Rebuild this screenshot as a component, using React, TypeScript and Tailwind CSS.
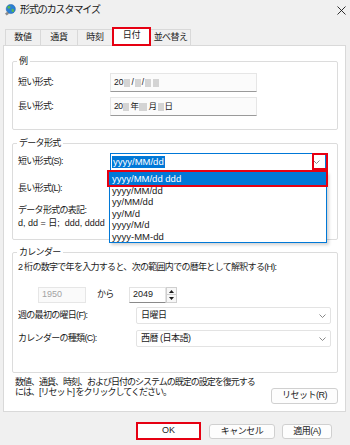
import React from "react";

const FONT = "font-['Liberation_Sans','Noto_Sans_CJK_JP',sans-serif]";

function Chevron() {
  return (
    <svg width="7" height="4" viewBox="0 0 7 4">
      <polyline points="0.5,0.5 3.5,3.5 6.5,0.5" fill="none" stroke="#7a7a7a" strokeWidth="0.9" />
    </svg>
  );
}

function Globe() {
  return (
    <svg width="12" height="12" viewBox="0 0 12 12">
      <circle cx="6.8" cy="5" r="4.6" fill="#2a7fd4" />
      <path d="M4.2 2 C5.6 1.4 7 2.6 6.4 3.8 C5.8 5 4.2 5 3.6 4 C3.2 3.2 3.4 2.4 4.2 2 Z" fill="#59b84f" />
      <path d="M7.6 5 C9 4.4 10.6 5.6 9.8 7.4 C9 8.6 7.8 8.2 7.6 7 Z" fill="#59b84f" />
      <circle cx="6.8" cy="5" r="4.6" fill="none" stroke="#1d5fa8" strokeWidth="0.5" />
      <path d="M1 9.5 L3.6 7.6 L5 9.8 L2.6 11.4 Z" fill="#8c8c8c" />
    </svg>
  );
}

function Blk({ w }: { w: "s" | "m" }) {
  return (
    <span
      className={
        w === "s"
          ? "inline-block w-[6px] h-[8px] bg-[#d4d4d4] blur-[0.4px] mx-[1px]"
          : "inline-block w-[8px] h-[8px] bg-[#d4d4d4] blur-[0.4px] mx-[1px]"
      }
    />
  );
}

export default function App() {
  const items = ["yyyy/MM/dd ddd", "yyyy/MM/dd", "yy/MM/dd", "yy/M/d", "yyyy/M/d", "yyyy-MM-dd"];
  return (
    <div className={`w-[350px] h-[445px] bg-[#f0f0f0] flex flex-col text-[9px] text-[#1a1a1a] overflow-hidden ${FONT}`}>
      {/* title bar */}
      <div className="h-[19px] flex items-center pl-[4px] pr-[4px] pt-[1px]">
        <Globe />
        <span className="ml-[4px] text-[10px] tracking-[-1.1px] leading-[12px]">形式のカスタマイズ</span>
        <svg className="ml-auto" width="9" height="9" viewBox="0 0 9 9">
          <path d="M0.5 0.5 L8.5 8.5 M8.5 0.5 L0.5 8.5" stroke="#1a1a1a" strokeWidth="0.9" />
        </svg>
      </div>

      {/* tabs */}
      <div className="mt-[8px] h-[18px] flex items-end pl-[5px]">
        <div className="w-[35px] h-[16px] border-t border-l border-[#d9d9d9] flex items-center justify-center tracking-[-0.3px]">数値</div>
        <div className="w-[37px] h-[16px] border-t border-l border-[#d9d9d9] flex items-center justify-center tracking-[-0.3px]">通貨</div>
        <div className="w-[35px] h-[16px] border-t border-l border-[#d9d9d9] flex items-center justify-center tracking-[-0.3px]">時刻</div>
        <div className="relative z-10 w-[39px] h-[19px] -mb-[1px] bg-white border-2 border-[#e60012] flex items-center justify-center pb-[2px] tracking-[-0.3px]">日付</div>
        <div className="w-[40px] h-[16px] border-t border-r border-[#d9d9d9] flex items-center justify-center tracking-[-0.6px]">並べ替え</div>
      </div>

      {/* panel */}
      <div className="ml-[3px] w-[343px] h-[367px] border border-[#d9d9d9] bg-white flex flex-col pl-[8px] pr-[7px]">
        {/* 例 */}
        <fieldset className="mt-[10px] border border-[#dcdcdc] rounded-[2px] pt-[6px] pb-[13px] min-w-0">
          <legend className="ml-[4px] px-[2px] leading-[11px]">例</legend>
          <div className="flex flex-col gap-[5px]">
            <div className="flex items-center h-[19px]">
              <span className="w-[97px] pl-[5px] tracking-[-0.7px]">短い形式:</span>
              <div className="w-[147px] h-[19px] bg-[#fbfbfb] border border-[#e6e6e6] border-b-[#9a9a9a] flex items-center pl-[3px] text-[8.5px]">
                20<Blk w="s" />/<Blk w="s" />/<Blk w="s" /><Blk w="s" />
              </div>
            </div>
            <div className="flex items-center h-[19px]">
              <span className="w-[97px] pl-[5px] tracking-[-0.7px]">長い形式:</span>
              <div className="w-[147px] h-[19px] bg-[#fbfbfb] border border-[#e6e6e6] border-b-[#9a9a9a] flex items-center pl-[3px] text-[8.5px] tracking-[-0.5px]">
                20<Blk w="s" />年<Blk w="m" />月<Blk w="s" />日
              </div>
            </div>
          </div>
        </fieldset>

        {/* データ形式 */}
        <fieldset className="mt-[8px] border border-[#dcdcdc] rounded-[2px] pt-[4px] pb-[10px] min-w-0">
          <legend className="ml-[4px] px-[2px] leading-[11px] tracking-[-0.7px]">データ形式</legend>
          <div className="flex items-center h-[18px]">
            <span className="w-[97px] pl-[5px] tracking-[-0.7px]">短い形式(S):</span>
            <div className="relative w-[216px] h-[18px] border border-[#0078d7] bg-white flex items-center pl-[1px] pr-[5px]">
              <span className="bg-[#0078d7] text-white text-[9.5px] leading-[12px] px-[1px]">yyyy/MM/dd</span>
              <span className="ml-auto"><Chevron /></span>
              {/* red box on chevron */}
              <div className="absolute left-[201px] -top-[1px] w-[16px] h-[17px] border-2 border-[#e60012] z-30" />
              {/* dropdown list */}
              <div className="absolute -left-[2px] top-[18px] w-[218px] h-[71px] bg-white border border-[#0078d7] shadow-[2px_2px_3px_rgba(0,0,0,0.18)] z-20 flex flex-col">
                {items.map((t, i) => (
                  <div
                    key={t}
                    className={
                      i === 0
                        ? "h-[11.5px] bg-[#0078d7] text-white text-[9.5px] leading-[11.5px] pl-[2px]"
                        : "h-[11.5px] text-[9.5px] leading-[11.5px] pl-[2px]"
                    }
                  >
                    {t}
                  </div>
                ))}
              </div>
              {/* red box on first item */}
              <div className="absolute -left-[4px] top-[16px] w-[221px] h-[17px] border-2 border-[#e60012] z-30" />
            </div>
          </div>
          <div className="mt-[9px] flex items-center h-[18px]">
            <span className="w-[97px] pl-[5px] tracking-[-0.7px]">長い形式(L):</span>
            <div className="w-[216px] h-[18px] border border-[#e3e3e3] bg-white" />
          </div>
          <div className="mt-[6.5px] pl-[5px] leading-[11px] tracking-[-0.7px]">データ形式の表記:</div>
          <div className="mt-[2px] pl-[5px] leading-[11px] whitespace-pre">{"d, dd = 日;  ddd, dddd"}</div>
        </fieldset>

        {/* カレンダー */}
        <fieldset className="mt-[7px] border border-[#dcdcdc] rounded-[2px] pt-[4px] pb-[25px] min-w-0">
          <legend className="ml-[4px] px-[2px] leading-[11px] tracking-[-0.7px]">カレンダー</legend>
          <div className="pl-[5px] leading-[11px] tracking-[-0.7px]">2 桁の数字で年を入力すると、次の範囲内での暦年として解釈する(H):</div>
          <div className="mt-[14.5px] flex items-center h-[16px]">
            <div className="ml-[25px] w-[48px] h-[16px] border border-[#e6e6e6] bg-[#fafafa] text-[#a3a3a3] flex items-center pl-[3px]">1950</div>
            <span className="w-[43px] pl-[11px] tracking-[-0.7px]">から</span>
            <div className="w-[37px] h-[16px] border border-[#e3e3e3] border-b-[#8a8a8a] bg-white flex items-center pl-[3px]">2049</div>
            <div className="w-[11px] h-[16px] flex flex-col border border-[#cfcfcf] bg-[#f7f7f7]">
              <div className="h-[7px] border-b border-[#cfcfcf] flex items-center justify-center">
                <svg width="5" height="3" viewBox="0 0 5 3"><path d="M0 3 L2.5 0 L5 3 Z" fill="#1a1a1a" /></svg>
              </div>
              <div className="flex-1 flex items-center justify-center">
                <svg width="5" height="3" viewBox="0 0 5 3"><path d="M0 0 L2.5 3 L5 0 Z" fill="#1a1a1a" /></svg>
              </div>
            </div>
          </div>
          <div className="mt-[4px] flex items-center h-[17px]">
            <span className="w-[123px] pl-[5px] tracking-[-0.7px]">週の最初の曜日(F):</span>
            <div className="w-[195px] h-[17px] border border-[#e3e3e3] rounded-[2px] bg-white flex items-center justify-between pl-[4px] pr-[4px]">
              <span className="tracking-[-0.5px]">日曜日</span>
              <Chevron />
            </div>
          </div>
          <div className="mt-[6px] flex items-center h-[17px]">
            <span className="w-[123px] pl-[5px] tracking-[-0.7px]">カレンダーの種類(C):</span>
            <div className="w-[195px] h-[17px] border border-[#e3e3e3] rounded-[2px] bg-white flex items-center justify-between pl-[4px] pr-[4px]">
              <span className="tracking-[-0.5px]">西暦 (日本語)</span>
              <Chevron />
            </div>
          </div>
        </fieldset>

        {/* footer in panel */}
        <div className="mt-[4px] flex items-start">
          <div className="ml-[3px] leading-[10px] tracking-[-1px]">
            <div>数値、通貨、時刻、および日付のシステムの既定の設定を復元する</div>
            <div>には、[リセット] をクリックしてください。</div>
          </div>
          <div className="ml-auto mt-[11px] w-[67px] h-[16px] border border-[#d0d0d0] rounded-[3px] bg-[#fdfdfd] flex items-center justify-center tracking-[-0.5px]">
            リセット(R)
          </div>
        </div>
      </div>

      {/* dialog buttons */}
      <div className="mt-[10px] flex items-start pl-[136px]">
        <div className="w-[65px] h-[18px] border-2 border-[#e60012] bg-white flex items-center justify-center">OK</div>
        <div className="ml-[8px] mt-[2px] w-[66px] h-[15px] border border-[#d0d0d0] rounded-[3px] bg-[#fdfdfd] flex items-center justify-center tracking-[-0.5px]">キャンセル</div>
        <div className="ml-[7px] mt-[2px] w-[50px] h-[15px] border border-[#d0d0d0] rounded-[3px] bg-[#fdfdfd] flex items-center justify-center tracking-[-0.5px]">適用(A)</div>
      </div>
    </div>
  );
}
